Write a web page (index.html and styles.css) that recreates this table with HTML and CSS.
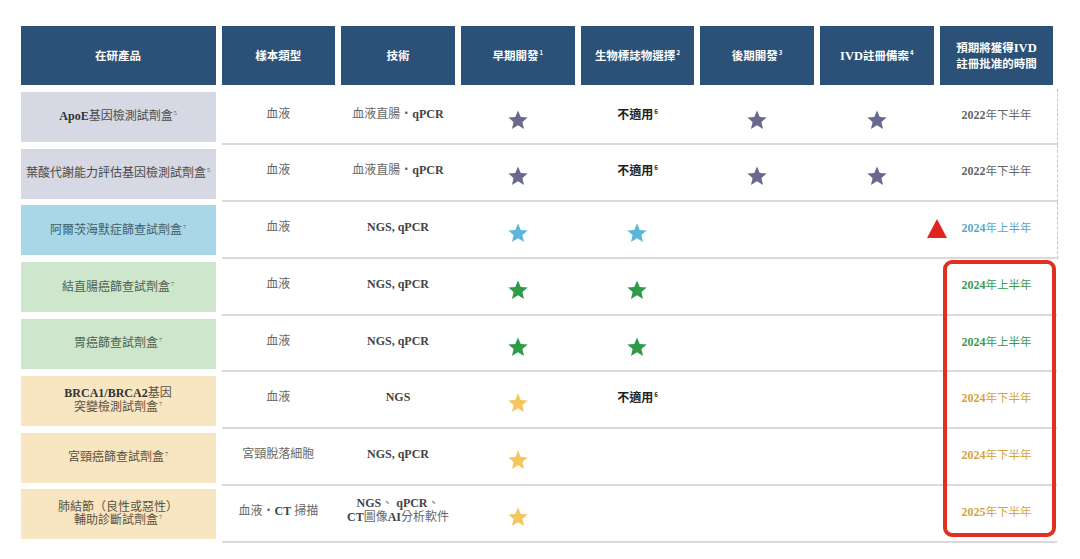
FILE: index.html
```html
<!DOCTYPE html>
<html lang="zh-Hant">
<head>
  <meta charset="UTF-8" />
  <title>在研產品</title>
  <link rel="stylesheet" href="styles.css">
</head>
<body>
  <svg width="0" height="0" class="defs">
    <symbol id="star" viewBox="0 0 24 24">
      <path d="M12 1.5l3 7.2 7.6.6-5.8 5 1.8 7.5L12 17.8l-6.6 4 1.8-7.5-5.8-5 7.6-.6z"/>
    </symbol>
  </svg>

  <div class="pipeline">
    <div class="head">
      <div class="th"><span>在研產品</span></div>
      <div class="th"><span>樣本類型</span></div>
      <div class="th"><span>技術</span></div>
      <div class="th"><span>早期開發<sup>1</sup></span></div>
      <div class="th"><span>生物標誌物選擇<sup>2</sup></span></div>
      <div class="th"><span>後期開發<sup>3</sup></span></div>
      <div class="th"><span><b class="latin">IVD</b>註冊備案<sup>4</sup></span></div>
      <div class="th"><span>預期將獲得<b class="latin">IVD</b><br>註冊批准的時間</span></div>
    </div>

    <div class="row">
      <div class="product gray"><span><b>ApoE</b>基因檢測試劑盒<sup>5</sup></span></div>
      <div class="data dashed">
        <div class="cell">血液</div>
        <div class="cell">血液直腸・<b>qPCR</b></div>
        <div class="cell mark"><svg class="star purple"><use href="#star"/></svg></div>
        <div class="cell na">不適用<sup>6</sup></div>
        <div class="cell mark"><svg class="star purple"><use href="#star"/></svg></div>
        <div class="cell mark"><svg class="star purple"><use href="#star"/></svg></div>
        <div class="cell date c-gray"><b>2022</b>年下半年</div>
      </div>
    </div>

    <div class="row">
      <div class="product gray"><span>葉酸代謝能力評估基因檢測試劑盒<sup>5</sup></span></div>
      <div class="data dashed">
        <div class="cell">血液</div>
        <div class="cell">血液直腸・<b>qPCR</b></div>
        <div class="cell mark"><svg class="star purple"><use href="#star"/></svg></div>
        <div class="cell na">不適用<sup>6</sup></div>
        <div class="cell mark"><svg class="star purple"><use href="#star"/></svg></div>
        <div class="cell mark"><svg class="star purple"><use href="#star"/></svg></div>
        <div class="cell date c-gray"><b>2022</b>年下半年</div>
      </div>
    </div>

    <div class="row">
      <div class="product blue"><span>阿爾茨海默症篩查試劑盒<sup>7</sup></span></div>
      <div class="data dashed">
        <div class="cell">血液</div>
        <div class="cell"><b>NGS, qPCR</b></div>
        <div class="cell mark"><svg class="star sky"><use href="#star"/></svg></div>
        <div class="cell mark"><svg class="star sky"><use href="#star"/></svg></div>
        <div class="cell"></div>
        <div class="cell flag"><span class="triangle"></span></div>
        <div class="cell date c-blue"><b>2024</b>年上半年</div>
      </div>
    </div>

    <div class="row">
      <div class="product green"><span>結直腸癌篩查試劑盒<sup>7</sup></span></div>
      <div class="data">
        <div class="cell">血液</div>
        <div class="cell"><b>NGS, qPCR</b></div>
        <div class="cell mark"><svg class="star leaf"><use href="#star"/></svg></div>
        <div class="cell mark"><svg class="star leaf"><use href="#star"/></svg></div>
        <div class="cell"></div>
        <div class="cell"></div>
        <div class="cell date c-green"><b>2024</b>年上半年</div>
      </div>
    </div>

    <div class="row">
      <div class="product green"><span>胃癌篩查試劑盒<sup>7</sup></span></div>
      <div class="data">
        <div class="cell">血液</div>
        <div class="cell"><b>NGS, qPCR</b></div>
        <div class="cell mark"><svg class="star leaf"><use href="#star"/></svg></div>
        <div class="cell mark"><svg class="star leaf"><use href="#star"/></svg></div>
        <div class="cell"></div>
        <div class="cell"></div>
        <div class="cell date c-green"><b>2024</b>年上半年</div>
      </div>
    </div>

    <div class="row">
      <div class="product sand"><span><b>BRCA1/BRCA2</b>基因<br>突變檢測試劑盒<sup>7</sup></span></div>
      <div class="data">
        <div class="cell">血液</div>
        <div class="cell"><b>NGS</b></div>
        <div class="cell mark"><svg class="star gold"><use href="#star"/></svg></div>
        <div class="cell na">不適用<sup>6</sup></div>
        <div class="cell"></div>
        <div class="cell"></div>
        <div class="cell date c-gold"><b>2024</b>年下半年</div>
      </div>
    </div>

    <div class="row">
      <div class="product sand"><span>宮頸癌篩查試劑盒<sup>7</sup></span></div>
      <div class="data">
        <div class="cell">宮頸脫落細胞</div>
        <div class="cell"><b>NGS, qPCR</b></div>
        <div class="cell mark"><svg class="star gold"><use href="#star"/></svg></div>
        <div class="cell"></div>
        <div class="cell"></div>
        <div class="cell"></div>
        <div class="cell date c-gold"><b>2024</b>年下半年</div>
      </div>
    </div>

    <div class="row">
      <div class="product sand"><span>肺結節（良性或惡性）<br>輔助診斷試劑盒<sup>7</sup></span></div>
      <div class="data">
        <div class="cell">血液・<b>CT</b> 掃描</div>
        <div class="cell two"><b>NGS</b>、 <b>qPCR</b>、<br><b>CT</b>圖像<b>AI</b>分析軟件</div>
        <div class="cell mark"><svg class="star gold"><use href="#star"/></svg></div>
        <div class="cell"></div>
        <div class="cell"></div>
        <div class="cell"></div>
        <div class="cell date c-gold"><b>2025</b>年下半年</div>
      </div>
    </div>

    <div class="highlight"></div>
  </div>
</body>
</html>
```

FILE: styles.css
```css
body {
  margin: 0;
  background: #fff;
  font-family: "Liberation Serif", "Noto Sans CJK TC", serif;
  font-size: 12px;
  color: #555;
}

.defs {
  position: absolute;
}

.pipeline {
  position: relative;
  padding: 26px 0 0 20.5px;
}

.head {
  display: grid;
  grid-template-columns: 195px repeat(7, 113.7px);
  column-gap: 6px;
  margin-bottom: 3.5px;
}

.th {
  height: 59px;
  background: #2b5178;
  color: #fff;
  font-family: "Noto Sans CJK TC", sans-serif;
  font-weight: 700;
  font-size: 11.5px;
  line-height: 15px;
  display: flex;
  align-items: center;
  justify-content: center;
  text-align: center;
}

.th .latin {
  font-family: "Liberation Serif", serif;
  font-size: 12.5px;
}

sup {
  font-size: 6px;
  vertical-align: 5px;
  line-height: 0;
  margin-left: 1px;
}

.row {
  display: grid;
  grid-template-columns: 195px max-content;
  column-gap: 6px;
  height: 56.8px;
}

.product {
  align-self: center;
  height: 50px;
  display: flex;
  align-items: center;
  justify-content: center;
  text-align: center;
  white-space: nowrap;
  line-height: 13.5px;
  color: #4b4b4b;
}

.product b {
  color: #333;
}

.gray { background: #d6d8e3; }
.blue { background: #a9d7e8; color: #3f5f6c; }
.green { background: #cde6cc; color: #4d6150; }
.sand { background: #f8e6c2; color: #5b5244; }

.data {
  display: grid;
  grid-template-columns: repeat(7, 113.7px);
  column-gap: 6px;
  padding-right: 3.5px;
  border-bottom: 2px solid #dadada;
}

.dashed {
  border-right: 1px dashed #c4c4c4;
}

.cell {
  padding-top: 17px;
  text-align: center;
  line-height: 16px;
  white-space: nowrap;
  color: #666;
}

.cell b {
  color: #444;
}

.cell.two {
  padding-top: 10px;
  line-height: 14px;
}

.cell.mark {
  padding-top: 20px;
}

.star {
  width: 22px;
  height: 22px;
}

.purple { fill: #69688f; }
.sky { fill: #5db6da; }
.leaf { fill: #2f9a48; }
.gold { fill: #f5c55e; }

.na {
  font-family: "Noto Sans CJK TC", sans-serif;
  font-weight: 700;
  color: #222;
}

.flag {
  display: flex;
  justify-content: flex-end;
  padding-top: 17px;
  margin-right: -13px;
}

.triangle {
  width: 0;
  height: 0;
  border-left: 10.5px solid transparent;
  border-right: 10.5px solid transparent;
  border-bottom: 19px solid #e3231f;
}

.date {
  padding-top: 18px;
  font-size: 11.5px;
}

.date b {
  font-size: 12px;
}

.c-gray, .c-gray b { color: #666; }
.c-blue, .c-blue b { color: #5aa8c9; }
.c-green, .c-green b { color: #3a9a52; }
.c-gold, .c-gold b { color: #d4a43c; }

.highlight {
  position: absolute;
  left: 943px;
  top: 260px;
  width: 113px;
  height: 277px;
  box-sizing: border-box;
  border: 4px solid #e0301f;
  border-radius: 9px;
}
```
